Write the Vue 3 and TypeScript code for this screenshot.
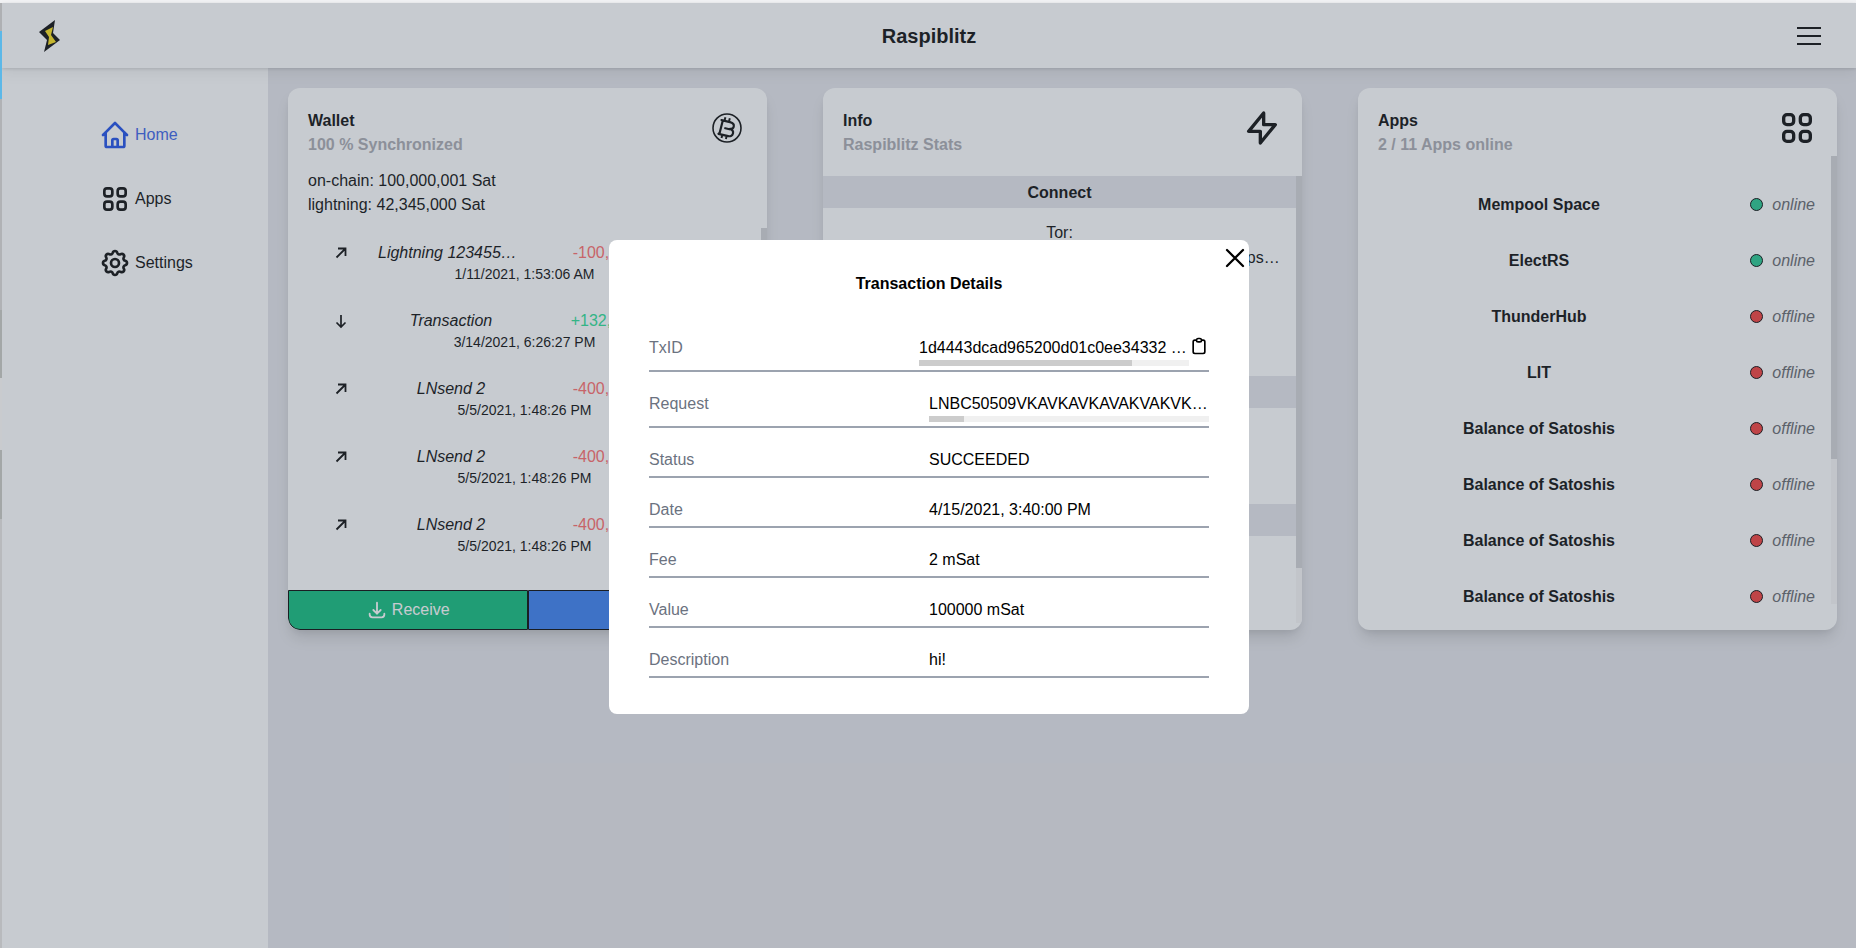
<script setup lang="ts">
interface Tx {
  dir: 'in' | 'out'
  title: string
  amount: string
  date: string
}

interface App {
  name: string
  online: boolean
}

const txs: Tx[] = [
  { dir: 'out', title: 'Lightning 1234556789', amount: '-100,000 Sat', date: '1/11/2021, 1:53:06 AM' },
  { dir: 'in', title: 'Transaction', amount: '+132,000 Sat', date: '3/14/2021, 6:26:27 PM' },
  { dir: 'out', title: 'LNsend 2', amount: '-400,000 Sat', date: '5/5/2021, 1:48:26 PM' },
  { dir: 'out', title: 'LNsend 2', amount: '-400,000 Sat', date: '5/5/2021, 1:48:26 PM' },
  { dir: 'out', title: 'LNsend 2', amount: '-400,000 Sat', date: '5/5/2021, 1:48:26 PM' },
]

const apps: App[] = [
  { name: 'Mempool Space', online: true },
  { name: 'ElectRS', online: true },
  { name: 'ThunderHub', online: false },
  { name: 'LIT', online: false },
  ...Array.from({ length: 7 }, () => ({ name: 'Balance of Satoshis', online: false })),
]

const details = [
  { label: 'Status', value: 'SUCCEEDED' },
  { label: 'Date', value: '4/15/2021, 3:40:00 PM' },
  { label: 'Fee', value: '2 mSat' },
  { label: 'Value', value: '100000 mSat' },
  { label: 'Description', value: 'hi!' },
]

const txId = '1d4443dcad965200d01c0ee34332 a8a1b7c94e0d5a'
const request = 'LNBC50509VKAVKAVKAVAKVAKVKAVKA' + 'VKAVKAVAKVAKVK'.repeat(16)
const onion = 'raspiblitz2vfhbnc6yw2ufrbptmk3sxzpkgqbudslv7d5gaabaps.onion'

// scrollbar thumb length as a share of the track
const thumb = (view: number, content: number) => `${(view / content) * 100}%`
</script>

<template>
  <div class="root">
    <header class="topbar">
      <svg class="logo" viewBox="0 0 24 34">
        <polygon points="18,1 16,14 23,21 7,33 10,21 2,13" fill="#050505" />
        <polygon points="8,12 16,8 14,16 19,23 11,26 12,18" fill="#fde013" />
      </svg>
      <h1 class="brand">Raspiblitz</h1>
      <div class="burger">
        <span />
        <span />
        <span />
      </div>
    </header>

    <div class="body">
      <nav class="sidebar">
        <a class="nav-item nav-item--active">
          <svg class="nav-icon" viewBox="0 0 24 24" fill="none" stroke="currentColor" stroke-width="2" stroke-linecap="round" stroke-linejoin="round">
            <path d="M3 12l2-2m0 0l7-7 7 7M5 10v10a1 1 0 001 1h3m10-11l2 2m-2-2v10a1 1 0 01-1 1h-3m-6 0a1 1 0 001-1v-4a1 1 0 011-1h2a1 1 0 011 1v4a1 1 0 001 1m-6 0h6" />
          </svg>
          <span>Home</span>
        </a>
        <a class="nav-item">
          <svg class="nav-icon" viewBox="0 0 24 24" fill="none" stroke="currentColor" stroke-width="2">
            <rect x="4" y="4" width="6" height="6" rx="2" />
            <rect x="14" y="4" width="6" height="6" rx="2" />
            <rect x="4" y="14" width="6" height="6" rx="2" />
            <rect x="14" y="14" width="6" height="6" rx="2" />
          </svg>
          <span>Apps</span>
        </a>
        <a class="nav-item">
          <svg class="nav-icon" viewBox="0 0 24 24" fill="none" stroke="currentColor" stroke-width="2" stroke-linecap="round" stroke-linejoin="round">
            <path d="M10.325 4.317c.426-1.756 2.924-1.756 3.35 0a1.724 1.724 0 002.573 1.066c1.543-.94 3.31.826 2.37 2.37a1.724 1.724 0 001.065 2.572c1.756.426 1.756 2.924 0 3.35a1.724 1.724 0 00-1.066 2.573c.94 1.543-.826 3.31-2.37 2.37a1.724 1.724 0 00-2.572 1.065c-.426 1.756-2.924 1.756-3.35 0a1.724 1.724 0 00-2.573-1.066c-1.543.94-3.31-.826-2.37-2.37a1.724 1.724 0 00-1.065-2.572c-1.756-.426-1.756-2.924 0-3.35a1.724 1.724 0 001.066-2.573c-.94-1.543.826-3.31 2.37-2.37.996.608 2.296.07 2.572-1.065z" />
            <path d="M15 12a3 3 0 11-6 0 3 3 0 016 0z" />
          </svg>
          <span>Settings</span>
        </a>
      </nav>

      <main class="main">
        <section class="card">
          <div class="card-head">
            <div class="card-text">
              <h2 class="card-title">Wallet</h2>
              <p class="card-sub">100 % Synchronized</p>
            </div>
            <svg class="btc-icon" viewBox="0 0 30 30" fill="none" stroke="currentColor">
              <circle cx="15" cy="15" r="14" stroke-width="1.6" />
              <g transform="translate(15 15) scale(1.22) translate(-15 -15)">
                <path stroke-width="1.8" stroke-linejoin="round" d="M10.500 8.500l7 1.700c2.400.6 3.400 2.100 3 3.700-.3 1.300-1.400 2-3 1.800 2 .8 2.800 2.200 2.400 3.800-.5 1.900-2.200 2.700-4.800 2l-7.100-1.700 1-.9 2.400-9.500zM12.800 15l5 1.200" />
                <path stroke-width="1.600" d="M13 8.900l.7-2.800M16.600 9.800l.7-2.800M11.200 20.400l-.7 2.800M14.800 21.300l-.7 2.800" />
              </g>
            </svg>
          </div>
          <div class="balances">
            <div>on-chain: 100,000,001 Sat</div>
            <div>lightning: 42,345,000 Sat</div>
          </div>
          <div class="scroll-area scroll-area--fill">
            <div class="tx-list">
              <div v-for="(tx, i) in txs" :key="i" class="tx">
                <svg v-if="tx.dir === 'out'" class="tx-arrow" viewBox="0 0 16 16" fill="none" stroke="currentColor" stroke-width="1.8">
                  <path d="M3.500 12.500L12.500 3.500M5 3.500H12.500V11" />
                </svg>
                <svg v-else class="tx-arrow" viewBox="0 0 16 16" fill="none" stroke="currentColor" stroke-width="1.7">
                  <path d="M8 2v12M3.500 9.500L8 14l4.500-4.500" />
                </svg>
                <span class="tx-title">{{ tx.title }}</span>
                <span class="tx-amount" :class="tx.dir === 'in' ? 'tx-amount--in' : 'tx-amount--out'">{{ tx.amount }}</span>
                <span class="tx-date">{{ tx.date }}</span>
              </div>
            </div>
            <div class="track">
              <div class="track-thumb" :style="{ height: thumb(362, 480) }" />
            </div>
          </div>
          <div class="wallet-actions">
            <button class="action action--receive">
              <svg class="action-icon" viewBox="0 0 24 24" fill="none" stroke="currentColor" stroke-width="2" stroke-linecap="round" stroke-linejoin="round">
                <path d="M4 16v1a3 3 0 003 3h10a3 3 0 003-3v-1m-4-4l-4 4m0 0l-4-4m4 4V4" />
              </svg>
              <span>Receive</span>
            </button>
            <button class="action action--send">Send</button>
          </div>
        </section>

        <section class="card">
          <div class="card-head card-head--info">
            <div class="card-text">
              <h2 class="card-title">Info</h2>
              <p class="card-sub">Raspiblitz Stats</p>
            </div>
            <svg class="head-icon" viewBox="0 0 24 24" fill="none" stroke="currentColor" stroke-width="2" stroke-linejoin="round">
              <path d="M13 10V3L4 14h7v7l9-11h-7z" />
            </svg>
          </div>
          <div class="scroll-area scroll-area--info">
            <div class="info-scroll">
              <h3 class="info-band">Connect</h3>
              <div class="info-body info-body--connect">
                <div>Tor:</div>
                <div class="onion">{{ onion }}</div>
              </div>
              <h3 class="info-band">Bitcoin</h3>
              <div class="info-body info-body--bitcoin" />
              <h3 class="info-band">Lightning</h3>
              <div class="info-body info-body--lightning" />
            </div>
            <div class="track">
              <div class="track-thumb" :style="{ height: thumb(447, 510) }" />
            </div>
          </div>
        </section>

        <section class="card">
          <div class="card-head">
            <div class="card-text">
              <h2 class="card-title">Apps</h2>
              <p class="card-sub">2 / 11 Apps online</p>
            </div>
            <svg class="head-icon" viewBox="0 0 24 24" fill="none" stroke="currentColor" stroke-width="2">
              <rect x="4" y="4" width="6" height="6" rx="2" />
              <rect x="14" y="4" width="6" height="6" rx="2" />
              <rect x="4" y="14" width="6" height="6" rx="2" />
              <rect x="14" y="14" width="6" height="6" rx="2" />
            </svg>
          </div>
          <div class="scroll-area scroll-area--apps">
            <div class="app-list">
              <div v-for="(app, i) in apps" :key="i" class="app-row">
                <span class="app-name">{{ app.name }}</span>
                <span class="app-status">
                  <i class="dot" :class="app.online ? 'dot--on' : 'dot--off'" />
                  <em>{{ app.online ? 'online' : 'offline' }}</em>
                </span>
              </div>
            </div>
            <div class="track">
              <div class="track-thumb" :style="{ height: thumb(448, 663) }" />
            </div>
          </div>
        </section>
      </main>
    </div>

    <div class="overlay">
      <div class="modal">
        <svg class="close" viewBox="0 0 24 24" fill="none" stroke="#000" stroke-width="1.7" stroke-linecap="round">
          <path d="M6 18L18 6M6 6l12 12" />
        </svg>
        <h2 class="modal-title">Transaction Details</h2>
        <dl class="details">
          <div class="detail">
            <dt>TxID</dt>
            <dd class="value-wide">
              <div class="scroll-box">
                <div class="scroll-value">{{ txId }}</div>
                <div class="h-track">
                  <div class="h-thumb" :style="{ width: thumb(270, 342) }" />
                </div>
              </div>
              <svg class="clip" viewBox="0 0 24 24" fill="none" stroke="#000" stroke-width="2" stroke-linecap="round" stroke-linejoin="round">
                <path d="M9 5H7a2 2 0 00-2 2v12a2 2 0 002 2h10a2 2 0 002-2V7a2 2 0 00-2-2h-2M9 5a2 2 0 002 2h2a2 2 0 002-2M9 5a2 2 0 012-2h2a2 2 0 012 2" />
              </svg>
            </dd>
          </div>
          <div class="detail">
            <dt>Request</dt>
            <dd>
              <div class="scroll-box">
                <div class="scroll-value">{{ request }}</div>
                <div class="h-track">
                  <div class="h-thumb" :style="{ width: thumb(280, 2240) }" />
                </div>
              </div>
            </dd>
          </div>
          <div v-for="row in details" :key="row.label" class="detail">
            <dt>{{ row.label }}</dt>
            <dd>{{ row.value }}</dd>
          </div>
        </dl>
      </div>
    </div>

    <i class="edge" />
  </div>
</template>

<style>
html,
body {
  margin: 0;
  overflow: hidden;
}
</style>

<style scoped>
.root {
  position: relative;
  height: 100vh;
  box-sizing: border-box;
  padding: 3px 0 0 2px;
  display: flex;
  flex-direction: column;
  overflow: hidden;
  background: #f3f4f6;
  color: #050505;
  font-family: "Liberation Sans", Arial, sans-serif;
  font-size: 16px;
  line-height: 24px;
}

.topbar {
  position: relative;
  z-index: 1;
  flex: none;
  height: 65px;
  display: flex;
  align-items: center;
  justify-content: center;
  background: #fff;
  box-shadow: 0 1px 3px rgba(0, 0, 0, 0.14), 0 4px 14px rgba(0, 0, 0, 0.08);
}

.logo {
  position: absolute;
  left: 35px;
  top: 16px;
  width: 24px;
  height: 34px;
}

.brand {
  margin: 0;
  font-size: 20px;
  font-weight: 700;
  line-height: 28px;
}

.burger {
  position: absolute;
  right: 35px;
  top: 24px;
  width: 24px;
  display: flex;
  flex-direction: column;
  gap: 6px;
}

.burger span {
  height: 2px;
  background: #050505;
}

.body {
  flex: 1;
  min-height: 0;
  display: flex;
}

.sidebar {
  flex: none;
  width: 169px;
  padding: 51px 0 0 97px;
  display: flex;
  flex-direction: column;
  gap: 32px;
  background: #fff;
}

.nav-item {
  display: flex;
  align-items: center;
  gap: 4px;
  height: 32px;
}

.nav-item--active {
  color: #184ae7;
}

.nav-item--active span {
  color: #3660e7;
}

.nav-icon {
  width: 32px;
  height: 32px;
}

.main {
  flex: 1;
  min-width: 0;
  box-sizing: border-box;
  padding: 20px 19px 0 20px;
  display: grid;
  grid-template-columns: repeat(3, 1fr);
  grid-auto-rows: 542px;
  gap: 56px;
  background: #e5e5ea;
}

.card {
  display: flex;
  flex-direction: column;
  min-height: 0;
  background: #fff;
  border-radius: 12px;
  overflow: hidden;
  box-shadow: 0 10px 15px -3px rgba(0, 0, 0, 0.14), 0 4px 6px -2px rgba(0, 0, 0, 0.07);
}

.card-head {
  flex: none;
  height: 48px;
  padding: 20px 20px 0;
  display: flex;
  justify-content: space-between;
}

.card-head--info {
  height: 68px;
}

.card-text {
  padding-top: 1px;
}

.card-title {
  margin: 0;
  font-size: 16px;
  font-weight: 700;
}

.card-sub {
  margin: 0;
  font-weight: 700;
  color: #a8a8af;
}

.btc-icon {
  width: 30px;
  height: 30px;
  margin: 5px 5px 0 0;
}

.head-icon {
  width: 40px;
  height: 40px;
}

.balances {
  flex: none;
  padding: 13px 20px 11px;
}

.scroll-area {
  display: flex;
  min-height: 0;
}

.scroll-area--fill {
  flex: 1;
}

.scroll-area--info {
  flex: none;
  height: 447px;
}

.scroll-area--apps {
  flex: none;
  height: 448px;
}

.track {
  flex: none;
  width: 6px;
  background: #f8f7f7;
}

.track-thumb {
  background: #d1d1d5;
}

.tx-list {
  flex: 1;
  min-width: 0;
  box-sizing: border-box;
  padding-top: 13px;
  overflow: hidden;
}

.tx {
  display: grid;
  grid-template-columns: 46px 174px 161px;
  padding-left: 30px;
  margin-bottom: 25px;
  align-items: center;
}

.tx-arrow {
  width: 16px;
  height: 16px;
  justify-self: center;
}

.tx-title {
  min-width: 0;
  padding: 0 14px;
  text-align: center;
  font-style: italic;
  white-space: nowrap;
  overflow: hidden;
  text-overflow: ellipsis;
}

.tx-amount {
  text-align: center;
  white-space: nowrap;
}

.tx-amount--in {
  color: #25de93;
}

.tx-amount--out {
  color: #ff6767;
}

.tx-date {
  grid-column: 1 / -1;
  margin: -1px -62px 0 -30px;
  text-align: center;
  font-size: 14px;
  line-height: 20px;
}

.wallet-actions {
  flex: none;
  display: flex;
  height: 40px;
}

.action {
  flex: 1;
  display: flex;
  align-items: center;
  justify-content: center;
  gap: 4px;
  margin: 0;
  padding: 0;
  border: 1px solid #000;
  color: #fff;
  font: inherit;
}

.action--receive {
  background: #0abb7a;
  border-bottom-left-radius: 12px;
}

.action--send {
  background: #367df0;
  border-bottom-right-radius: 12px;
}

.action-icon {
  width: 22px;
  height: 22px;
}

.info-scroll {
  flex: 1;
  min-width: 0;
  overflow: hidden;
}

.info-band {
  margin: 0;
  height: 32px;
  line-height: 33px;
  font-size: 16px;
  text-align: center;
  background: #e5e5ea;
}

.info-body {
  box-sizing: border-box;
  text-align: center;
}

.info-body--connect {
  height: 168px;
  padding: 13px 20px 0;
}

.info-body--bitcoin {
  height: 96px;
}

.info-body--lightning {
  height: 152px;
}

.onion {
  margin: 1px -4px 0 0;
  white-space: nowrap;
  overflow: hidden;
  text-overflow: ellipsis;
}

.app-list {
  flex: 1;
  min-width: 0;
  box-sizing: border-box;
  padding-top: 21px;
  overflow: hidden;
}

.app-row {
  height: 56px;
  display: grid;
  grid-template-columns: 362px 1fr;
  align-items: center;
}

.app-name {
  font-weight: 700;
  text-align: center;
}

.app-status {
  display: flex;
  align-items: center;
  justify-content: flex-end;
  gap: 9px;
  padding-right: 16px;
  color: #626469;
}

.dot {
  box-sizing: border-box;
  width: 13px;
  height: 13px;
  margin-top: -2px;
  border: 1px solid #000;
  border-radius: 50%;
}

.dot--on {
  background: #1fc68d;
}

.dot--off {
  background: #f43836;
}

.overlay {
  position: absolute;
  z-index: 5;
  inset: 3px 0 0 2px;
  padding-top: 3px;
  display: flex;
  align-items: center;
  justify-content: center;
  background: rgba(82, 93, 108, 0.32);
}

.modal {
  position: relative;
  box-sizing: border-box;
  width: 640px;
  padding: 32px 40px 36px;
  background: #fff;
  border-radius: 8px;
  color: #000;
}

.close {
  position: absolute;
  top: 2px;
  right: -2px;
  width: 32px;
  height: 32px;
}

.modal-title {
  margin: 0 0 20px;
  font-size: 16px;
  font-weight: 700;
  line-height: 24px;
  text-align: center;
}

.details {
  margin: 0;
}

.detail {
  display: flex;
  justify-content: space-between;
  padding: 20px 0 4px;
  border-bottom: 2px solid #9ca3af;
}

.detail dt {
  color: #6b7280;
}

.detail dd {
  box-sizing: border-box;
  width: 280px;
  margin: 0;
  min-width: 0;
}

.detail dd.value-wide {
  width: 290px;
  display: flex;
  align-items: flex-start;
}

.scroll-box {
  flex: 1;
  min-width: 0;
}

.scroll-value {
  white-space: nowrap;
  overflow: hidden;
  text-overflow: ellipsis;
}

.h-track {
  height: 6px;
  background: #f0f0f0;
}

.h-thumb {
  height: 100%;
  background: #ccc;
}

.clip {
  flex: none;
  width: 20px;
  height: 20px;
}

.edge {
  position: absolute;
  z-index: 6;
  left: 0;
  top: 3px;
  bottom: 0;
  width: 2px;
  background: linear-gradient(
    to bottom,
    #aeb0b3 0 28px,
    #5cb8e8 28px 96px,
    #b0b2b5 96px 307px,
    #a3a7a7 307px 375px,
    #c9cbce 375px 447px,
    #a3a7a7 447px 516px,
    #b8babd 516px
  );
}
</style>
